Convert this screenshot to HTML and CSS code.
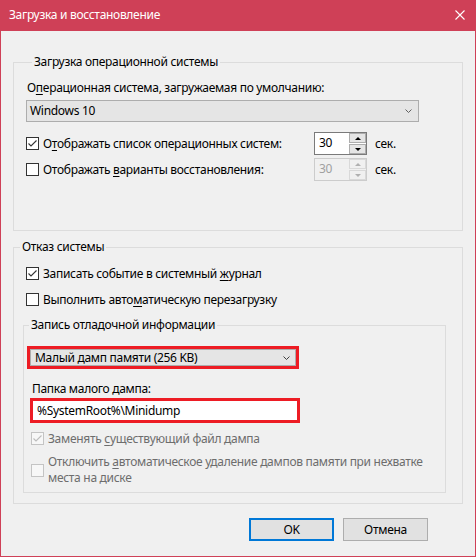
FILE: index.html
```html
<!DOCTYPE html>
<html lang="ru">
<head>
<meta charset="utf-8">
<title>Загрузка и восстановление</title>
<link rel="stylesheet" href="styles.css">
</head>
<body>
<div class="window">
  <div class="titlebar">
    <span class="title">Загрузка и восстановление</span>
    <svg class="close" width="10" height="10" viewBox="0 0 10 10"><path d="M0.5 0.5L9.5 9.5M9.5 0.5L0.5 9.5" stroke="#ffffff" stroke-width="1.1" fill="none"/></svg>
  </div>
  <div class="content">
    <fieldset class="group g1">
      <legend>Загрузка операционной системы</legend>
      <div class="label l1">О<u>п</u>ерационная система, загружаемая по умолчанию:</div>
      <div class="combo c1"><span>Windows 10</span><svg class="chev" width="7" height="4" viewBox="0 0 7 4"><path d="M0.5 0.5L3.5 3.5L6.5 0.5" stroke="#606060" fill="none"/></svg></div>
      <div class="srow r1">
        <div class="check"><span class="cb"><svg width="11" height="11" viewBox="0 0 11 11"><path d="M1.5 5.5L4 8L9.5 2.5" stroke="#333" stroke-width="1.1" fill="none"/></svg></span><span>О<u>т</u>ображать список операционных систем:</span></div>
        <div class="spin"><span class="field">30</span><span class="btns"><span class="sb"><i class="up"></i></span><span class="sb"><i class="down"></i></span></span></div>
        <span class="unit">сек.</span>
      </div>
      <div class="srow r2">
        <div class="check"><span class="cb"></span><span>Отображать <u>в</u>арианты восстановления:</span></div>
        <div class="spin disabled"><span class="field">30</span><span class="btns"><span class="sb"><i class="up"></i></span><span class="sb"><i class="down"></i></span></span></div>
        <span class="unit">сек.</span>
      </div>
    </fieldset>

    <fieldset class="group g2">
      <legend>Отказ системы</legend>
      <div class="check crow r3"><span class="cb"><svg width="11" height="11" viewBox="0 0 11 11"><path d="M1.5 5.5L4 8L9.5 2.5" stroke="#333" stroke-width="1.1" fill="none"/></svg></span><span>Записать событие в системный <u>ж</u>урнал</span></div>
      <div class="check crow r4"><span class="cb"></span><span>Выполнить авто<u>м</u>атическую перезагрузку</span></div>

      <fieldset class="group g3">
        <legend>Запись отладочной информации</legend>
        <div class="redbox combo-red"><div class="combo c2"><span>Малый дамп памяти (256 KB)</span><svg class="chev" width="7" height="4" viewBox="0 0 7 4"><path d="M0.5 0.5L3.5 3.5L6.5 0.5" stroke="#404040" fill="none"/></svg></div></div>
        <div class="label l2">Папка малого дампа:</div>
        <div class="redbox textbox">%SystemRoot%\Minidump</div>
        <div class="check crow dis r5"><span class="cb"><svg width="11" height="11" viewBox="0 0 11 11"><path d="M1.5 5.5L4 8L9.5 2.5" stroke="#bcbcbc" stroke-width="1.1" fill="none"/></svg></span><span>Заменять <u>с</u>уществующий файл дампа</span></div>
        <div class="check crow dis r6"><span class="cb"></span><span class="multi"><span class="line">Отключить <u>а</u>втоматическое удаление дампов памяти при нехватке</span><span class="line">места на диске</span></span></div>
      </fieldset>
    </fieldset>

    <div class="buttons">
      <button class="btn default">OK</button>
      <button class="btn">Отмена</button>
    </div>
  </div>
</div>
</body>
</html>
```

FILE: styles.css
```css
* { box-sizing: border-box; }
html, body { margin: 0; padding: 0; }
body {
  width: 476px;
  height: 557px;
  overflow: hidden;
  background: #f0f0f0;
  font-family: "Noto Sans", "Segoe UI", sans-serif;
  font-size: 12px;
  line-height: 16px;
  letter-spacing: -0.3px;
  color: #000;
}
u { text-decoration: underline; text-underline-offset: 2px; text-decoration-thickness: 1px; }

.window {
  width: 476px;
  height: 557px;
  border: 1px solid #cf4057;
  border-top: 0;
  display: flex;
  flex-direction: column;
  background: #f0f0f0;
}
.titlebar {
  height: 31px;
  flex: none;
  background: #cf4057;
  color: #fff;
  display: flex;
  align-items: center;
  justify-content: space-between;
  padding: 0 10px 1px 8px;
}
.title { font-size: 12px; }
.close { display: block; }

.content {
  display: flex;
  flex-direction: column;
  padding: 0 12px;
}

.group {
  margin: 0;
  padding: 0;
  border: 1px solid #dcdcdc;
  min-width: 0;
  display: flex;
  flex-direction: column;
  align-items: flex-start;
}
.group > legend {
  padding: 0 2px;
  margin-left: 6px;
  line-height: 16px;
  height: 16px;
}
.g1 { margin-top: 23px; width: 450px; padding: 0 12px 49px 12px; }
.g2 { margin-top: 8px; width: 450px; padding: 0 0 10px 0; }
.g3 { margin: 9px 0 0 9px; width: 423px; padding: 0 0 6px 0; }
.g3 > legend { margin-left: 5px; }

.label { height: 16px; line-height: 16px; white-space: nowrap; }
.l1 { margin-top: 10px; padding-left: 1px; }
.l2 { margin-top: 12px; margin-left: 8px; }

.combo {
  height: 22px;
  border: 1px solid #adadad;
  background: #e5e5e5;
  display: flex;
  align-items: center;
  justify-content: space-between;
}
.c1 { margin-top: 4px; width: 393px; padding: 0 6px 0 3px; }
.chev { display: block; }

.check { display: flex; align-items: center; gap: 4px; white-space: nowrap; }
.cb {
  width: 13px;
  height: 13px;
  flex: none;
  border: 1px solid #333;
  background: #fff;
  display: flex;
  align-items: center;
  justify-content: center;
}
.cb svg { display: block; }

.srow { display: flex; align-items: center; height: 23px; }
.srow .check { width: 288px; }
.r1 { margin-top: 10px; }
.r2 { margin-top: 3px; }
.unit { margin-left: 8px; }

.spin {
  width: 53px;
  height: 23px;
  display: flex;
  border: 1px solid #7a7a7a;
  background: #fff;
}
.spin .field { flex: 1; padding-left: 4px; line-height: 20px; }
.btns { width: 17px; display: flex; flex-direction: column; gap: 1px; padding: 0; }
.sb {
  flex: 1;
  border: 1px solid #adadad;
  background: #e5e5e5;
  display: flex;
  align-items: center;
  justify-content: center;
}
.sb i { display: block; width: 0; height: 0; border-left: 3px solid transparent; border-right: 3px solid transparent; }
.sb .up { border-bottom: 3px solid #000; }
.sb .down { border-top: 3px solid #000; }
.spin.disabled { border-color: #cccccc; background: #f0f0f0; color: #a0a0a0; }
.spin.disabled .sb { border-color: #d9d9d9; background: #f0f0f0; }
.spin.disabled .sb .up { border-bottom-color: #b0b0b0; }
.spin.disabled .sb .down { border-top-color: #b0b0b0; }

.crow { height: 17px; margin-left: 12px; }
.r3 { margin-top: 10px; }
.r4 { margin-top: 9px; }

.redbox { border: 3px solid #ed1c24; }
.combo-red { margin: 13px 0 0 3px; width: 272px; height: 23px; }
.c2 { width: 100%; height: 100%; padding: 0 5px 0 4px; }
.textbox {
  margin: 1px 0 0 6px;
  width: 270px;
  height: 25px;
  background: #fff;
  padding-left: 4px;
  line-height: 19px;
}

.dis { color: #6d6d6d; margin-left: 7px; }
.dis .cb { border-color: #c4c4c4; background: #f7f7f7; }
.r5 { margin-top: 7px; }
.r6 { margin-top: 7px; height: 32px; }
.multi { display: flex; flex-direction: column; }
.multi .line { display: block; height: 16px; line-height: 16px; }

.buttons {
  display: flex;
  justify-content: flex-end;
  gap: 9px;
  margin-top: 14px;
  padding-right: 35px;
}
.btn {
  width: 85px;
  height: 23px;
  padding: 0;
  border: 1px solid #adadad;
  background: #e1e1e1;
  font-family: inherit;
  font-size: 12px;
  letter-spacing: -0.3px;
  color: #000;
}
.btn.default { border: 2px solid #0078d7; }
```
